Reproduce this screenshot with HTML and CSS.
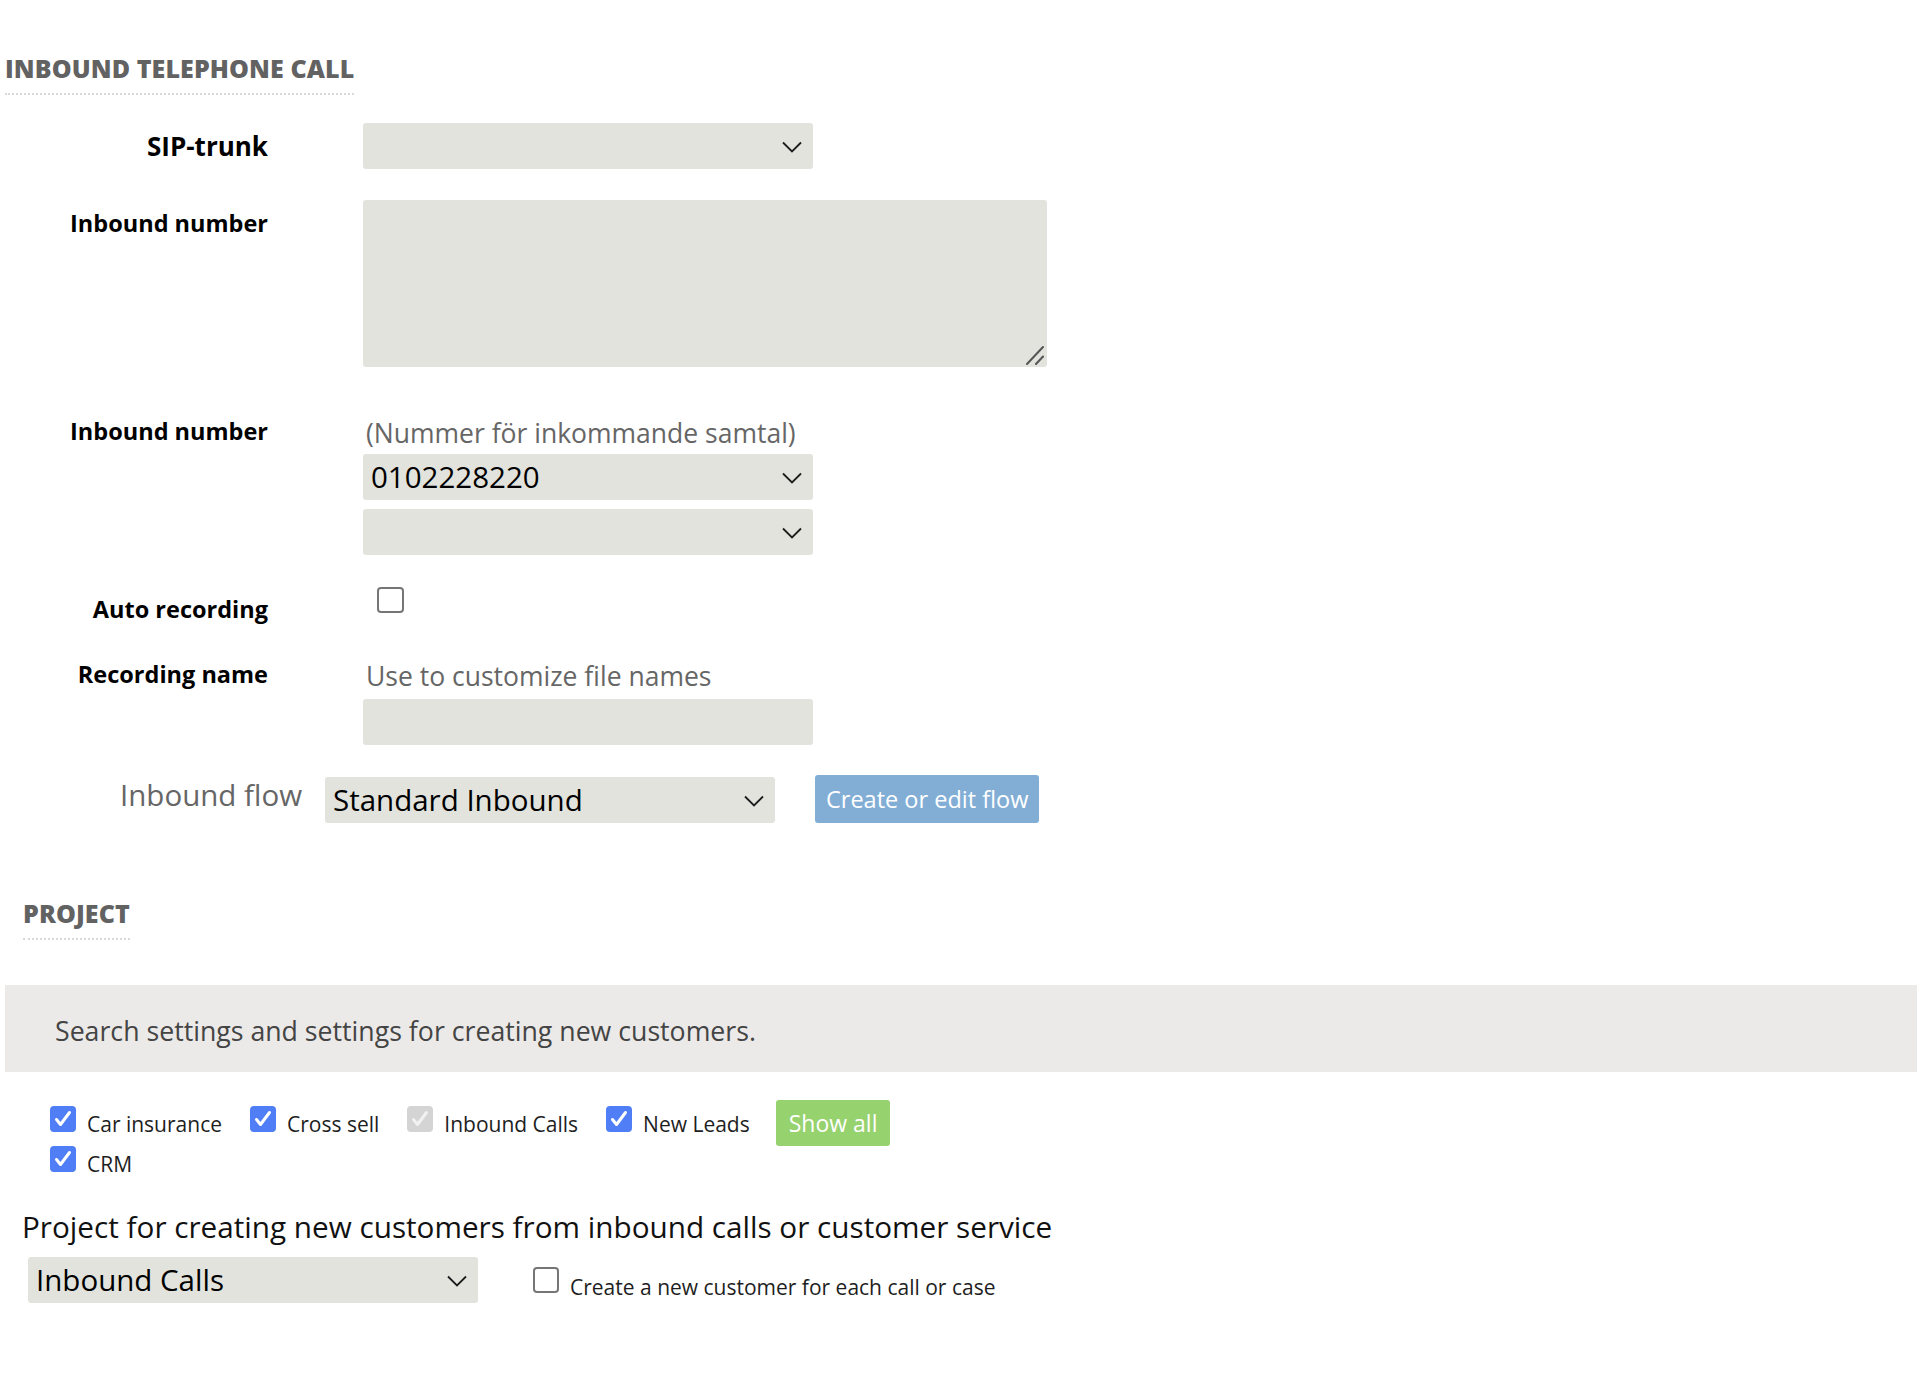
FILE: index.html
```html
<!DOCTYPE html>
<html lang="en">
<head>
<meta charset="utf-8">
<title>Inbound telephone call</title>
<link rel="stylesheet" href="styles.css">
</head>
<body>
<div class="page">
  <section class="inbound">
    <h2 class="section-title">INBOUND TELEPHONE CALL</h2>

    <div class="form-row row-sip">
      <label class="form-label label-sip">SIP-trunk</label>
      <div class="form-field">
        <div class="select"><span class="select-value"></span>
          <svg class="chev" width="20" height="12" viewBox="0 0 20 12"><polyline points="1,1.5 10,10.5 19,1.5"/></svg>
        </div>
      </div>
    </div>

    <div class="form-row row-textarea">
      <label class="form-label">Inbound number</label>
      <div class="form-field">
        <div class="textarea-wrap">
          <textarea class="textarea"></textarea>
          <svg class="grip" width="20" height="20" viewBox="0 0 20 20"><line x1="2" y1="19" x2="18" y2="2"/><line x1="11" y1="19" x2="18" y2="11.5"/></svg>
        </div>
      </div>
    </div>

    <div class="form-row row-number">
      <label class="form-label">Inbound number</label>
      <div class="form-field">
        <div class="helper">(Nummer för inkommande samtal)</div>
        <div class="select select-after-helper"><span class="select-value">0102228220</span>
          <svg class="chev" width="20" height="12" viewBox="0 0 20 12"><polyline points="1,1.5 10,10.5 19,1.5"/></svg>
        </div>
        <div class="select select-second"><span class="select-value"></span>
          <svg class="chev" width="20" height="12" viewBox="0 0 20 12"><polyline points="1,1.5 10,10.5 19,1.5"/></svg>
        </div>
      </div>
    </div>

    <div class="form-row row-auto">
      <label class="form-label">Auto recording</label>
      <div class="form-field">
        <span class="cb cb-auto"></span>
      </div>
    </div>

    <div class="form-row row-recname">
      <label class="form-label">Recording name</label>
      <div class="form-field">
        <div class="helper">Use to customize file names</div>
        <div class="text-input"></div>
      </div>
    </div>

    <div class="flow-row">
      <label class="flow-label">Inbound flow</label>
      <div class="select select-flow"><span class="select-value">Standard Inbound</span>
        <svg class="chev" width="20" height="12" viewBox="0 0 20 12"><polyline points="1,1.5 10,10.5 19,1.5"/></svg>
      </div>
      <span class="btn btn-flow">Create or edit flow</span>
    </div>
  </section>

  <section class="project">
    <h2 class="section-title project-title">PROJECT</h2>
    <div class="info-band">Search settings and settings for creating new customers.</div>

    <div class="check-list">
      <span class="pitem"><span class="cb checked"><svg width="26" height="26" viewBox="0 0 26 26"><path d="M6.5 13.5 L10.5 18.5 L19.5 6.5"/></svg></span><span class="pitem-label">Car insurance</span></span>
      <span class="pitem"><span class="cb checked"><svg width="26" height="26" viewBox="0 0 26 26"><path d="M6.5 13.5 L10.5 18.5 L19.5 6.5"/></svg></span><span class="pitem-label">Cross sell</span></span>
      <span class="pitem"><span class="cb checked disabled"><svg width="26" height="26" viewBox="0 0 26 26"><path d="M6.5 13.5 L10.5 18.5 L19.5 6.5"/></svg></span><span class="pitem-label">Inbound Calls</span></span>
      <span class="pitem"><span class="cb checked"><svg width="26" height="26" viewBox="0 0 26 26"><path d="M6.5 13.5 L10.5 18.5 L19.5 6.5"/></svg></span><span class="pitem-label">New Leads</span></span>
      <span class="btn btn-show">Show all</span>
      <span class="pitem"><span class="cb checked"><svg width="26" height="26" viewBox="0 0 26 26"><path d="M6.5 13.5 L10.5 18.5 L19.5 6.5"/></svg></span><span class="pitem-label">CRM</span></span>
    </div>

    <p class="project-text">Project for creating new customers from inbound calls or customer service</p>

    <div class="create-row">
      <div class="select select-project"><span class="select-value">Inbound Calls</span>
        <svg class="chev" width="20" height="12" viewBox="0 0 20 12"><polyline points="1,1.5 10,10.5 19,1.5"/></svg>
      </div>
      <span class="cb cb-create"></span>
      <span class="create-label">Create a new customer for each call or case</span>
    </div>
  </section>
</div>
</body>
</html>
```

FILE: styles.css
```css
* {
  box-sizing: border-box;
}

body {
  margin: 0;
  background: #ffffff;
  color: #000000;
  font-family: "Open Sans", "Noto Sans", sans-serif;
}

.page {
  padding: 52px 0 60px 5px;
}

/* Section headings */
.section-title {
  display: inline-block;
  margin: 0;
  font-size: 25px;
  font-weight: 800;
  line-height: 32px;
  letter-spacing: 0.1px;
  color: #626262;
  padding-bottom: 9px;
  border-bottom: 2px dotted #d9d9d9;
}

/* Form rows */
.form-row {
  display: flex;
  align-items: flex-start;
}

.form-label {
  width: 263px;
  flex: none;
  text-align: right;
  font-size: 23.5px;
  font-weight: 700;
  line-height: 32px;
  color: #000;
}

.form-field {
  margin-left: 95px;
}

.row-sip {
  margin-top: 28px;
  align-items: center;
}

.label-sip {
  font-size: 26px;
}

.row-textarea {
  margin-top: 31px;
}

.row-textarea .form-label {
  margin-top: 7px;
}

.row-number {
  margin-top: 48px;
}

.row-auto {
  margin-top: 32px;
}

.row-auto .form-label {
  margin-top: 6px;
}

.row-recname {
  margin-top: 33px;
}

/* Controls */
.select {
  display: flex;
  align-items: center;
  justify-content: space-between;
  width: 450px;
  height: 46px;
  padding: 0 11px 0 8px;
  background: #e2e3dc;
  border-radius: 3px;
  font-size: 29.5px;
  line-height: 46px;
  color: #000;
}

.select-value {
  white-space: nowrap;
}

.chev {
  flex: none;
  margin-top: 2px;
}

.chev polyline {
  fill: none;
  stroke: #1c1c1c;
  stroke-width: 1.8;
}

.select-after-helper {
  margin-top: 3px;
}

.select-second {
  margin-top: 9px;
}

.textarea-wrap {
  position: relative;
  width: 684px;
  height: 167px;
}

.textarea {
  display: block;
  width: 684px;
  height: 167px;
  margin: 0;
  border: none;
  border-radius: 3px;
  background: #e2e3dc;
  font-family: inherit;
  resize: none;
  outline: none;
}

.grip {
  position: absolute;
  right: 2px;
  bottom: 2px;
  pointer-events: none;
}

.grip line {
  stroke: #555555;
  stroke-width: 2;
  stroke-linecap: round;
}

.helper {
  padding-left: 3px;
  font-size: 26.5px;
  line-height: 36px;
  color: #666666;
  white-space: nowrap;
}

.text-input {
  width: 450px;
  height: 46px;
  margin-top: 5px;
  background: #e2e3dc;
  border-radius: 3px;
}

/* Checkboxes */
.cb {
  display: block;
  flex: none;
  width: 26px;
  height: 26px;
  border-radius: 4px;
  border: 2px solid #767676;
  background: #ffffff;
}

.cb svg {
  display: block;
}

.cb.checked {
  border: none;
  background: #4f7ef6;
}

.cb.checked path {
  fill: none;
  stroke: #ffffff;
  stroke-width: 3;
  stroke-linecap: round;
  stroke-linejoin: round;
}

.cb.disabled {
  background: #d4d4d4;
}

.cb.disabled path {
  stroke: #f1f1f1;
}

.cb-auto {
  width: 27px;
  margin-left: 14px;
}

/* Inbound flow row */
.flow-row {
  display: flex;
  align-items: flex-start;
  margin-top: 30px;
}

.flow-label {
  width: 297px;
  flex: none;
  text-align: right;
  font-size: 29.5px;
  line-height: 40px;
  color: #666666;
}

.select-flow {
  margin-left: 23px;
  margin-top: 2px;
}

.btn {
  display: inline-block;
  flex: none;
  color: #ffffff;
  border-radius: 3px;
  white-space: nowrap;
}

.btn-flow {
  margin-left: 40px;
  height: 48px;
  padding: 0 11px;
  font-size: 23.5px;
  line-height: 48px;
  background: #82aed6;
}

/* Project section */
.project {
  margin-top: 74px;
}

.project-title {
  margin-left: 18px;
}

.info-band {
  margin-top: 45px;
  height: 87px;
  padding: 28px 0 23px 50px;
  background: #ebeae8;
  font-size: 26.7px;
  line-height: 36px;
  color: #444444;
}

.check-list {
  display: flex;
  flex-wrap: wrap;
  align-items: baseline;
  width: 925px;
  margin-top: 28px;
  padding-left: 45px;
}

.pitem {
  display: flex;
  align-items: baseline;
  margin-right: 28px;
}

.pitem-label {
  margin-left: 11px;
  font-size: 21px;
  line-height: 28px;
  color: #1e1e1e;
}

.btn-show {
  margin-left: -2px;
  height: 46px;
  padding: 0 13px;
  font-size: 23px;
  line-height: 46px;
  background: #96d26e;
}

.project-text {
  margin: 29px 0 0 17px;
  font-size: 29.7px;
  line-height: 40px;
  color: #111111;
}

.create-row {
  display: flex;
  align-items: flex-start;
  margin-top: 10px;
  margin-left: 23px;
}

.cb-create {
  margin-left: 55px;
  margin-top: 10px;
}

.create-label {
  margin-left: 11px;
  margin-top: 16px;
  font-size: 21px;
  line-height: 28px;
  color: #1e1e1e;
  white-space: nowrap;
}
```
